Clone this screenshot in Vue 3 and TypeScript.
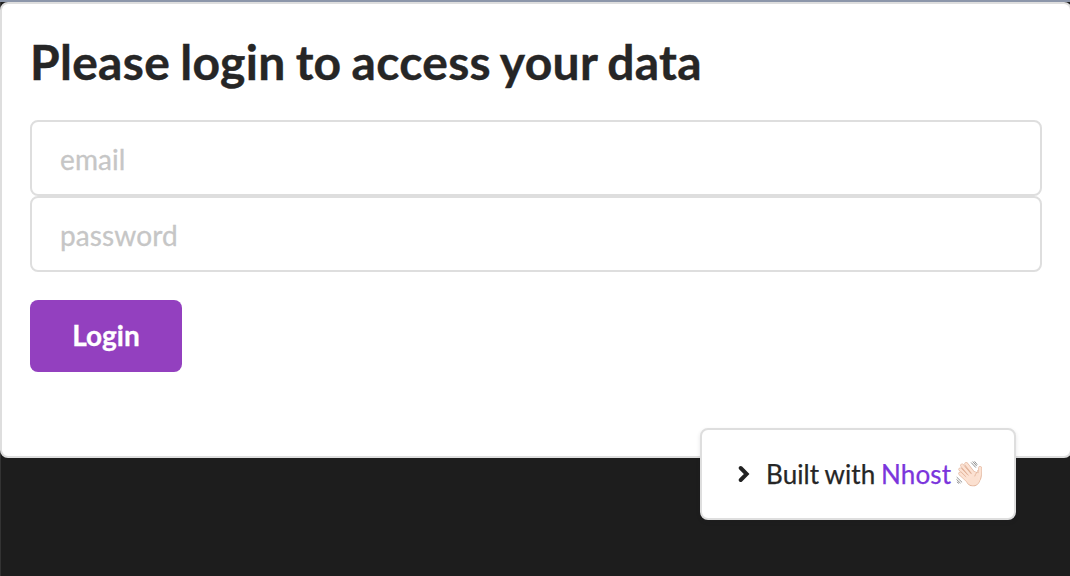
<script setup lang="ts">
import { ref } from 'vue'

const email = ref('')
const password = ref('')
</script>

<template>
  <main class="screen">
    <form class="card" @submit.prevent>
      <h1 class="title">Please login to access your data</h1>
      <input v-model="email" class="field" type="text" placeholder="email" />
      <input v-model="password" class="field" type="password" placeholder="password" />
      <button class="login" type="submit">Login</button>
    </form>
    <aside class="built">
      <svg class="chevron" width="12" height="18" viewBox="0 0 12 18">
        <path d="M2.7 3 8.7 9 2.7 15" fill="none" stroke="#222" stroke-width="3.9" stroke-linecap="round" />
      </svg>
      <span class="caption">Built with <a class="brand">Nhost</a></span>
      <svg class="wave" width="28" height="28" viewBox="0 0 28 28">
        <g fill="none" stroke-linecap="round" stroke-linejoin="round">
          <g stroke="#e2b49b" stroke-width="3.7">
            <path d="M4.2 13.6 11 20M4.3 9.4 13 18M6.1 5.5 15 16M10.2 4 18 14" />
            <path d="M24.2 8C23.4 10.2 24.6 14 23.5 18" />
          </g>
          <path d="M11 19.2 18.5 13.2 22.2 14.5C24.4 20 20.5 24.8 16.5 24.5 14 24.4 12.3 22.2 11 19.2Z" fill="#fbe0d0" stroke="#e2b49b" stroke-width="3.7" />
          <path d="M11 19.2 18.5 13.2 22.2 14.5C24.4 20 20.5 24.4 16.5 24.1 14 24 12.3 22.2 11 19.2Z" fill="#fbe0d0" stroke="#fbe0d0" stroke-width="2.8" />
          <g stroke="#fce2d3" stroke-width="2.7">
            <path d="M4.2 13.6 11 20M4.3 9.4 13 18M6.1 5.5 15 16M10.2 4 18 14" />
            <path d="M24.2 8C23.4 10.2 24.6 14 23 18" />
          </g>
          <path d="M5.4 12.2 9.6 16.4M6.6 9.2 11.4 14.6M9.4 6.6 14 12.2M21.8 10.5C21.5 12.8 19.3 13.2 18.8 16" stroke="#dfae94" stroke-width=".8" />
          <path
            d="m15.4 2.8 4.2 4.5M17 1.8l3.5 4M18.8 1.7l2.2 2.7M1 17.4l4.8 4.7M.8 19.7l3.4 3.2M1.2 22.1l1.6 1.2"
            stroke="#858585" stroke-width=".9"
          />
        </g>
      </svg>
    </aside>
  </main>
</template>

<style>
body {
  margin: 0;
  background: #1d1d1d;
}
</style>

<style scoped>
.screen {
  position: relative;
  box-sizing: border-box;
  width: 1070px;
  height: 576px;
  overflow: hidden;
  padding-top: 2px;
  background: linear-gradient(#8c96aa 2px, #1d1d1d 2px);
  font-family: Lato, sans-serif;
  color: #262626;
}
.screen::before {
  content: '';
  position: absolute;
  left: 0;
  top: 2px;
  bottom: 0;
  width: 1px;
  background: #333;
}
.card {
  position: relative;
  display: flex;
  flex-direction: column;
  align-items: flex-start;
  box-sizing: border-box;
  width: 1072px;
  height: 456px;
  padding: 28px;
  border: 2px solid #dedede;
  border-radius: 8px;
  background: #fff;
}
.title {
  margin: 0 0 28px;
  font-size: 48px;
  font-weight: 700;
  line-height: 60px;
  letter-spacing: 0.3px;
  word-spacing: -1.9px;
  -webkit-text-stroke: 0.4px #262626;
  white-space: nowrap;
}
.field {
  box-sizing: border-box;
  width: 1012px;
  height: 76px;
  margin: 0;
  padding: 1px 28px 0;
  border: 2px solid #dedede;
  border-radius: 8px;
  outline: 0;
  background: #fff;
  font: 28px Lato, sans-serif;
  letter-spacing: 0.1px;
  color: #262626;
}
.field::placeholder {
  color: #c6c6c6;
  opacity: 1;
  -webkit-text-stroke: 0.3px #c6c6c6;
}
.login {
  width: 152px;
  height: 72px;
  margin: 28px 0 0;
  padding: 0 0 2px;
  border: 0;
  border-radius: 8px;
  background: #9340bf;
  color: #fff;
  font: 700 28px/70px Lato, sans-serif;
  -webkit-text-stroke: 0.3px #fff;
}
.built {
  position: absolute;
  left: 700px;
  top: 428px;
  display: flex;
  align-items: center;
  box-sizing: border-box;
  width: 316px;
  height: 92px;
  padding-left: 36px;
  border: 2px solid #dedede;
  border-radius: 8px;
  background: #fff;
  box-shadow: 0 2px 4px rgba(34, 36, 38, 0.12);
}
.chevron {
  flex: none;
}
.caption {
  margin-left: 16px;
  font-size: 26px;
  line-height: 36px;
  white-space: nowrap;
  letter-spacing: 0.1px;
  word-spacing: -1px;
  -webkit-text-stroke: 0.25px currentColor;
}
.brand {
  color: #7b35dc;
}
.wave {
  flex: none;
  margin-left: 5px;
}
</style>
